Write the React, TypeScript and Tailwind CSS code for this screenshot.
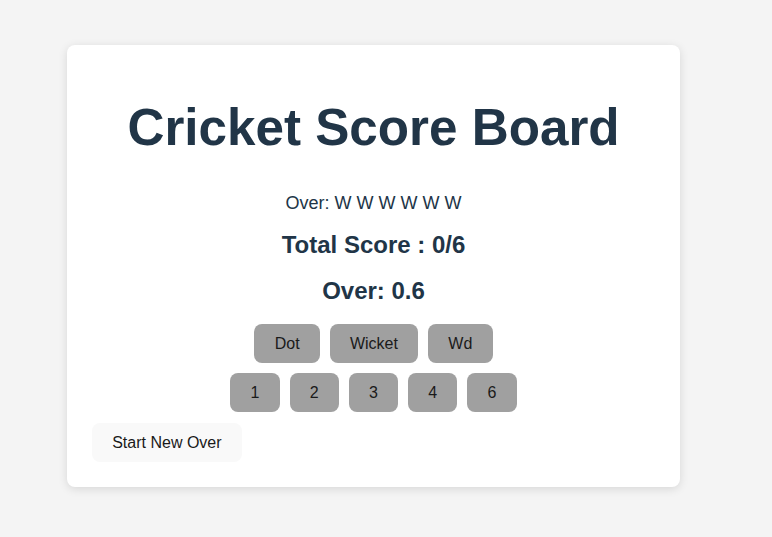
import React from "react";

export default function App() {
  const btn =
    "h-[39px] px-[19.2px] rounded-[8px] bg-[#a0a0a0] text-[16px] text-[#1a1a1a] leading-none border border-transparent";
  return (
    <div
      className="min-h-[537px] w-full bg-[#f4f4f4] pt-[45px] pl-[67px]"
      style={{ fontFamily: '"Liberation Sans", Arial, sans-serif' }}
    >
      <div className="w-[613px] h-[442px] bg-white rounded-[8px] shadow-[0_2px_10px_rgba(0,0,0,0.12)] flex flex-col items-center px-[25px]">
        <h1 className="mt-[55px] text-[51.2px] leading-[56px] font-bold text-[#213547]">
          Cricket Score Board
        </h1>
        <p className="mt-[38px] text-[18px] leading-[18px] text-[#213547]">
          Over: W W W W W W
        </p>
        <p className="mt-[21px] text-[24px] leading-[24px] font-bold text-[#213547]">
          Total Score : 0/6
        </p>
        <p className="mt-[22px] text-[24px] leading-[24px] font-bold text-[#213547]">
          Over: 0.6
        </p>
        <div className="mt-[21px] flex gap-[10px]">
          <button className={btn}>Dot</button>
          <button className={btn}>Wicket</button>
          <button className={btn}>Wd</button>
        </div>
        <div className="mt-[10px] flex gap-[10px]">
          {["1", "2", "3", "4", "6"].map((n) => (
            <button key={n} className={btn}>
              {n}
            </button>
          ))}
        </div>
        <div className="mt-[11px] self-start">
          <button className="h-[39px] px-[19.2px] rounded-[8px] bg-[#f9f9f9] text-[16px] text-[#1a1a1a] leading-none border border-transparent">
            Start New Over
          </button>
        </div>
      </div>
    </div>
  );
}
